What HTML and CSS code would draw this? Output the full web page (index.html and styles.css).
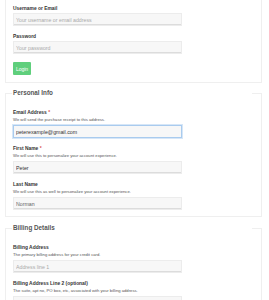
FILE: index.html
```html
<!DOCTYPE html>
<html lang="en">
<head>
  <meta charset="UTF-8">
  <meta name="viewport" content="width=device-width, initial-scale=1.0"/>
  <title>Checkout</title>
  <link rel="stylesheet" href="styles.css">
</head>
<body>
  <form class="checkout">

    <!-- login -->
    <fieldset class="box login">
      <div class="field">
        <label>Username or Email</label>
        <input type="text" placeholder="Your username or email address">
      </div>
      <div class="field">
        <label>Password</label>
        <input type="password" placeholder="Your password">
      </div>
      <button type="button" class="btn">Login</button>
    </fieldset>

    <!-- personal info -->
    <fieldset class="box">
      <legend>Personal Info</legend>
      <div class="field">
        <label>Email Address <span class="req">*</span></label>
        <p class="help">We will send the purchase receipt to this address.</p>
        <input type="email" class="focus" value="peterexample@gmail.com">
      </div>
      <div class="field">
        <label>First Name <span class="req">*</span></label>
        <p class="help">We will use this to personalize your account experience.</p>
        <input type="text" value="Peter">
      </div>
      <div class="field">
        <label>Last Name</label>
        <p class="help">We will use this as well to personalize your account experience.</p>
        <input type="text" class="soft" value="Norman">
      </div>
    </fieldset>

    <!-- billing -->
    <fieldset class="box">
      <legend>Billing Details</legend>
      <div class="field">
        <label>Billing Address</label>
        <p class="help">The primary billing address for your credit card.</p>
        <input type="text" placeholder="Address line 1">
      </div>
      <div class="field">
        <label>Billing Address Line 2 (optional)</label>
        <p class="help">The suite, apt no, PO box, etc, associated with your billing address.</p>
        <input type="text">
      </div>
    </fieldset>

  </form>
</body>
</html>
```

FILE: styles.css
```css
:root {
  --border:   #efefef;
  --label:    #333;
  --muted:    #555;
  --input-bg: #f7f7f7;
  --green:    #5fcf7c;
  --font:     'Liberation Sans', Arial, sans-serif;
}
* { box-sizing: border-box; margin:0; padding:0 }
body {
  font-family: var(--font);
  background: #fff;
  color: var(--label);
}
.checkout { padding:0 7px 0 5px; margin-top:-3px; }

/* box = fieldset card; la legend sposta il bordo alto di 4px */
.box {
  border:1px solid var(--border);
  background:#fff;
  padding:13px 7px 6px 7px;
  margin-bottom:7px;
  min-width:0;
}
.box.login { padding-top:8px; padding-bottom:7px; margin-bottom:6px; }
.box legend {
  width:240px;
  font-size:6.3px;
  line-height:8px;
  font-weight:bold;
  color:var(--muted);
  margin-left:-1px;
  padding-left:1px;
}

.field { margin-bottom:8px; }
.field:last-child { margin-bottom:0; }
.field label {
  display:block;
  font-size:4.9px;
  line-height:6px;
  font-weight:bold;
  color:var(--label);
  margin-bottom:1px;
}
.field .req { color:#d9534f; }
.field .help {
  font-size:4.2px;
  line-height:5px;
  color:var(--muted);
  margin-top:1px;
  margin-bottom:3px;
}
.field input {
  display:block;
  width:169px; height:13px;
  padding:0 2px;
  font-family:var(--font);
  font-size:5.25px;
  color:var(--label);
  background:var(--input-bg);
  border:1px solid #ececec;
  box-shadow:inset 0 -1px 0 #dcdcdc;
  outline:none;
}
.field input::placeholder { color:#aaa; }
.field input.soft { color:#666; }
.field input.focus {
  border-color:#a9cbee;
  box-shadow:0 0 0 1px #d6e6f7;
}

.btn {
  display:block;
  width:18px; height:13px;
  background:var(--green);
  color:#fff;
  border:none;
  border-radius:1px;
  font-family:var(--font);
  font-size:5px;
}
```
